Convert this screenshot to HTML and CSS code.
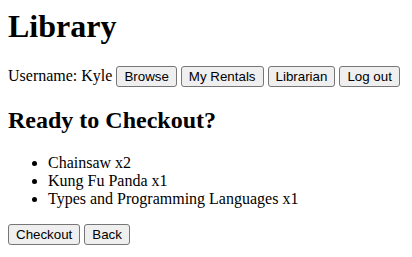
FILE: index.html
```html
<!DOCTYPE html>
<html>
<head>
<meta charset="utf-8">
<link rel="stylesheet" href="styles.css">
</head>
<body>
<h1 class="title">Library</h1>
<div class="nav">Username: Kyle <button class="btn">Browse</button> <button class="btn">My Rentals</button> <button class="btn">Librarian</button> <button class="btn">Log out</button></div>
<h2 class="heading">Ready to Checkout?</h2>
<ul class="items">
<li>Chainsaw x2</li>
<li>Kung Fu Panda x1</li>
<li>Types and Programming Languages x1</li>
</ul>
<div class="actions"><button class="btn">Checkout</button> <button class="btn">Back</button></div>
</body>
</html>
```
FILE: styles.css
```css
body {
  margin: 8px;
  font-family: "Liberation Serif", serif;
  font-size: 16px;
  color: #000;
  background: #fff;
}
.title { font-size: 32px; margin: 0 0 21px; }
.heading { font-size: 24px; margin: 20px 0; }
.items { margin: 16px 0; padding-left: 40px; }
.btn {
  font-family: "Liberation Sans", Arial, sans-serif;
  font-size: 13.33px;
  padding: 2px 7px;
  border: 1px solid #767676;
  border-radius: 3px;
  background: #efefef;
  color: #000;
}
```
